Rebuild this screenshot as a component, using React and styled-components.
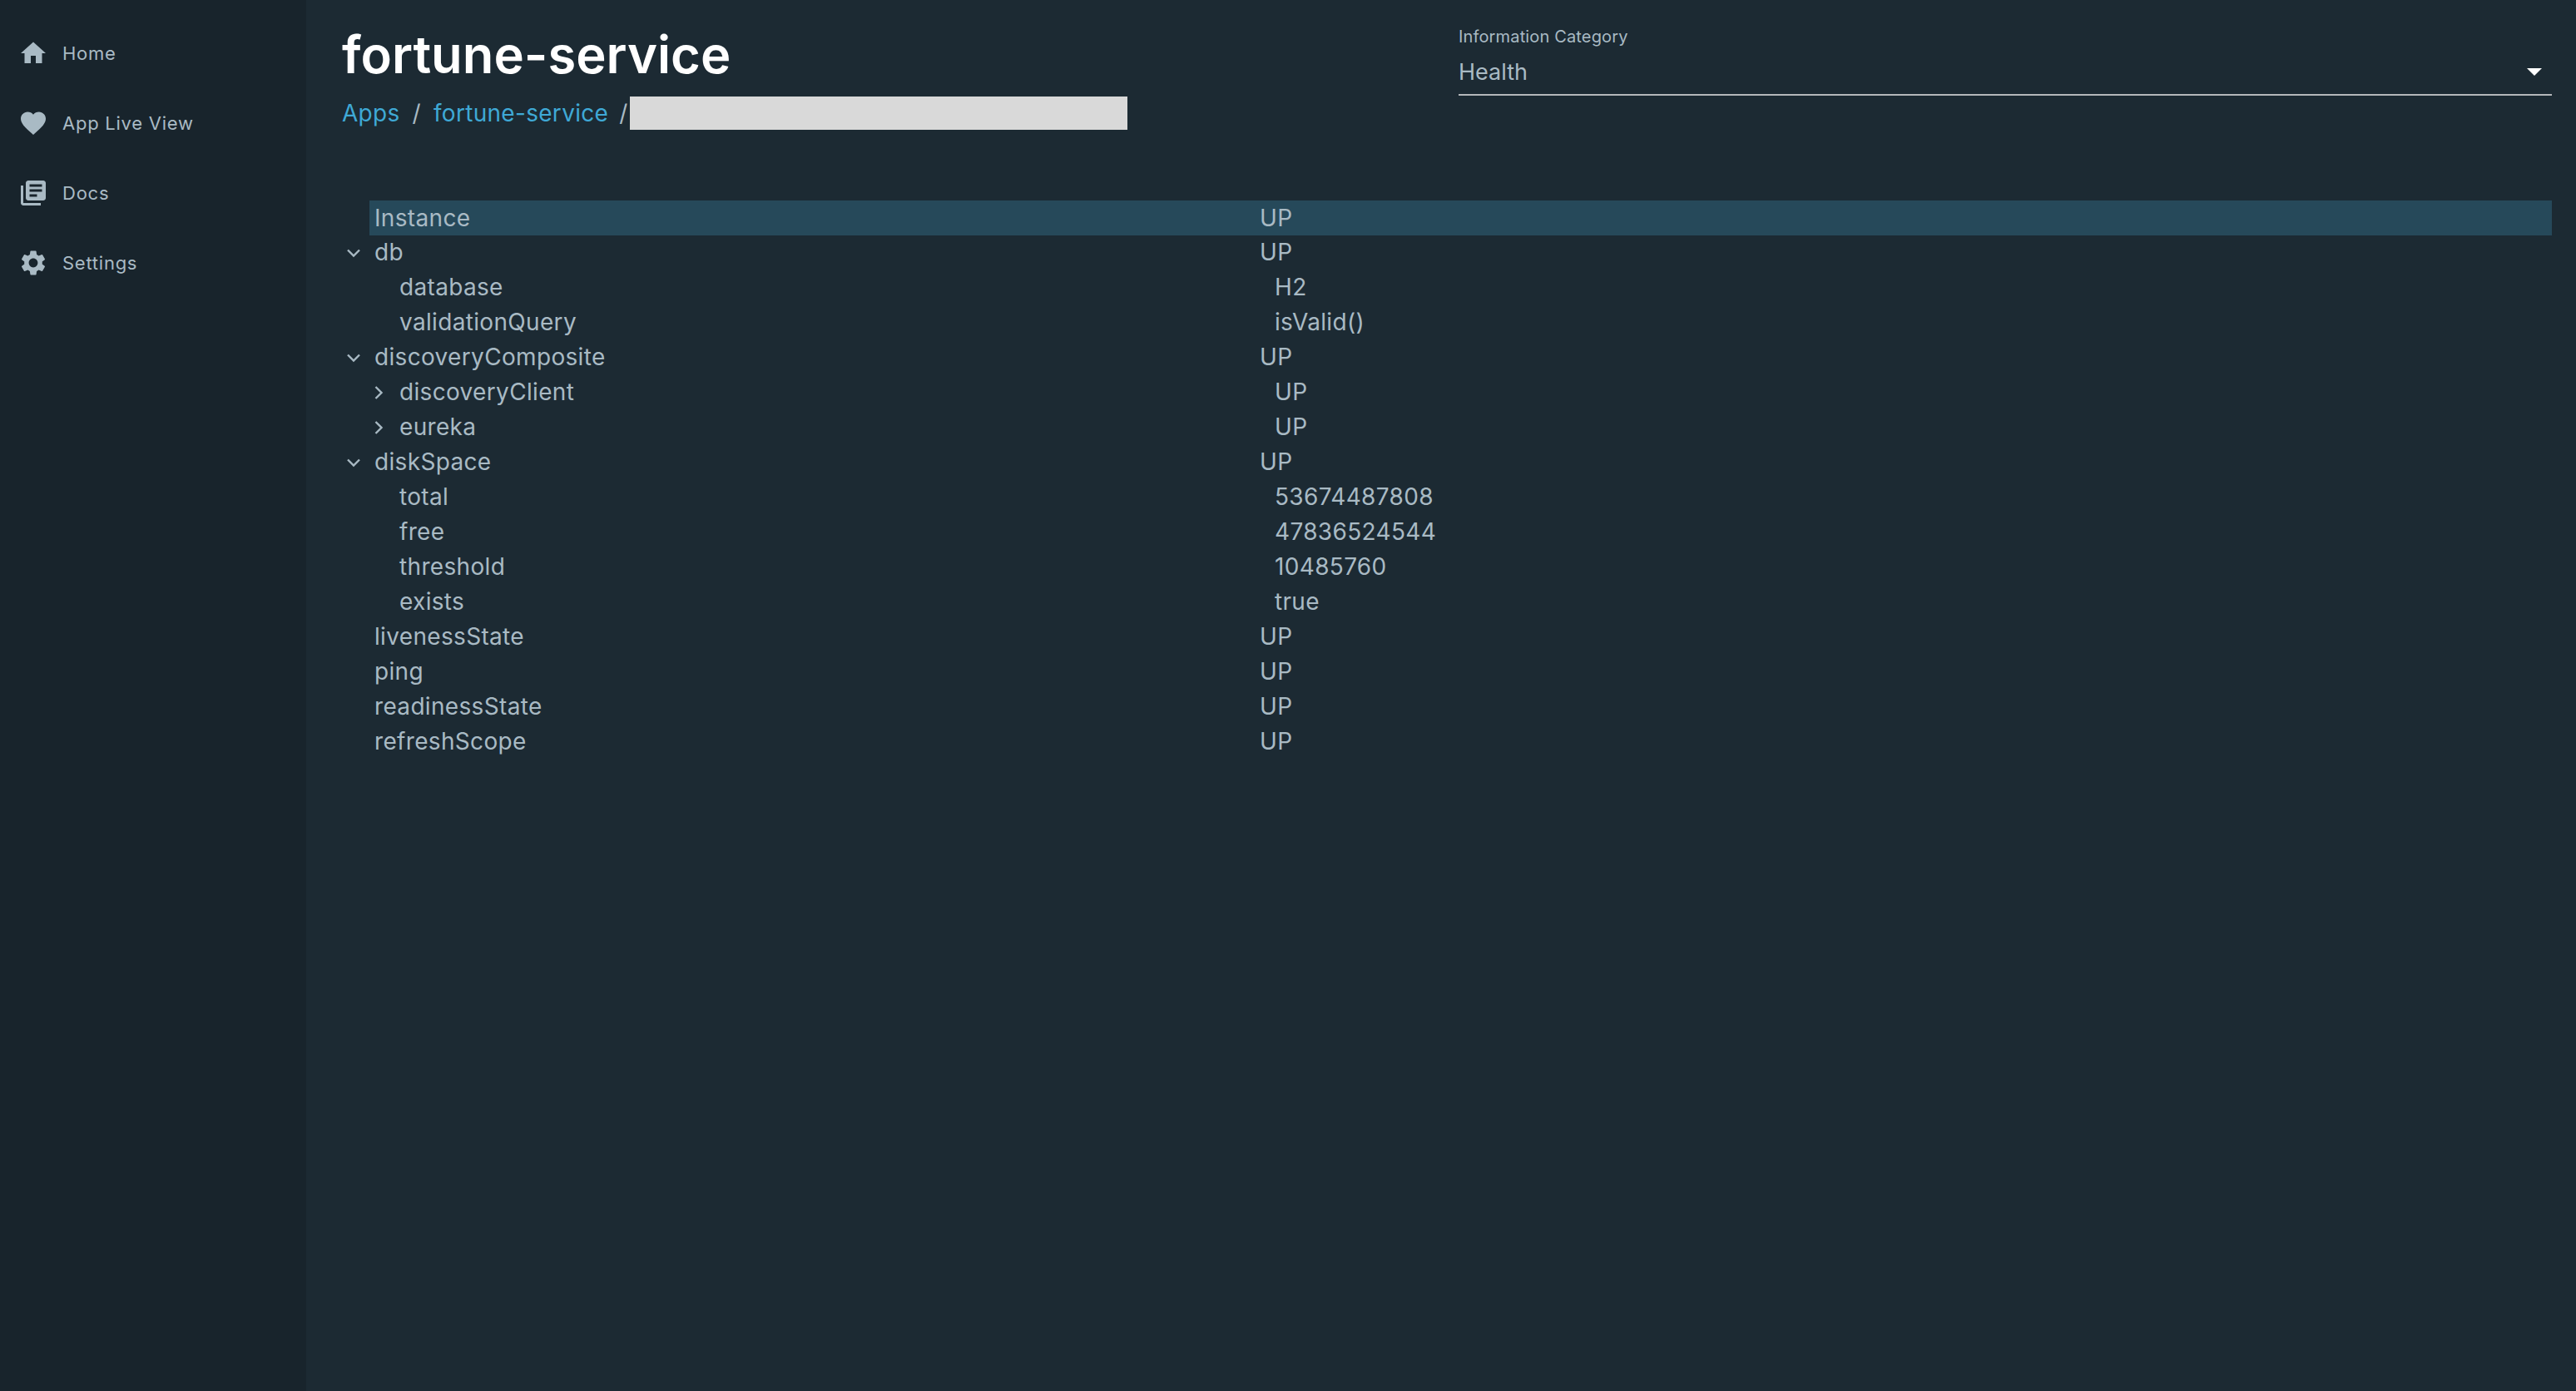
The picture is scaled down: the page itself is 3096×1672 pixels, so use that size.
import React from 'react';
import styled, { createGlobalStyle } from 'styled-components';
import { MdHome, MdFavorite, MdLibraryBooks, MdSettings } from 'react-icons/md';

const GlobalStyle = createGlobalStyle`
  html, body {
    margin: 0;
    padding: 0;
    height: 100%;
    background: #1c2a33;
  }
  body {
    font-family: Inter, "Open Sans", "Liberation Sans", sans-serif;
  }
`;

const navItems = [
  { label: 'Home', icon: MdHome },
  { label: 'App Live View', icon: MdFavorite },
  { label: 'Docs', icon: MdLibraryBooks },
  { label: 'Settings', icon: MdSettings },
];

const rows = [
  { label: 'db', value: 'UP', depth: 0, toggle: 'open' },
  { label: 'database', value: 'H2', depth: 1 },
  { label: 'validationQuery', value: 'isValid()', depth: 1 },
  { label: 'discoveryComposite', value: 'UP', depth: 0, toggle: 'open' },
  { label: 'discoveryClient', value: 'UP', depth: 1, toggle: 'closed' },
  { label: 'eureka', value: 'UP', depth: 1, toggle: 'closed' },
  { label: 'diskSpace', value: 'UP', depth: 0, toggle: 'open' },
  { label: 'total', value: '53674487808', depth: 1 },
  { label: 'free', value: '47836524544', depth: 1 },
  { label: 'threshold', value: '10485760', depth: 1 },
  { label: 'exists', value: 'true', depth: 1 },
  { label: 'livenessState', value: 'UP', depth: 0 },
  { label: 'ping', value: 'UP', depth: 0 },
  { label: 'readinessState', value: 'UP', depth: 0 },
  { label: 'refreshScope', value: 'UP', depth: 0 },
];

function Chevron({ open }) {
  return (
    <svg width="18" height="18" viewBox="0 0 18 18" fill="none">
      <path
        d={open ? 'M2 5.5 L9 12.5 L16 5.5' : 'M5.5 2 L12.5 9 L5.5 16'}
        stroke="#a9bac4"
        strokeWidth="2.4"
      />
    </svg>
  );
}

export default function App() {
  return (
    <Layout>
      <GlobalStyle />
      <Sidebar>
        {navItems.map(({ label, icon: Icon }) => (
          <NavItem key={label}>
            <Icon size={36} />
            <NavLabel>{label}</NavLabel>
          </NavItem>
        ))}
      </Sidebar>
      <Main>
        <Header>
          <TitleBlock>
            <Title>fortune-service</Title>
            <Breadcrumb>
              <Crumb>Apps</Crumb>
              <Slash>/</Slash>
              <Crumb>fortune-service</Crumb>
              <LastSlash>/</LastSlash>
              <Redacted />
            </Breadcrumb>
          </TitleBlock>
          <SelectBox>
            <SelectLabel>Information Category</SelectLabel>
            <SelectValue>
              Health
              <Caret />
            </SelectValue>
          </SelectBox>
        </Header>
        <Tree>
          <HeadRow>
            <HeadLabel>Instance</HeadLabel>
            <span>UP</span>
          </HeadRow>
          {rows.map((row) => (
            <Row key={row.label} $depth={row.depth}>
              <Toggle>{row.toggle && <Chevron open={row.toggle === 'open'} />}</Toggle>
              <RowLabel $depth={row.depth}>{row.label}</RowLabel>
              <span>{row.value}</span>
            </Row>
          ))}
        </Tree>
      </Main>
    </Layout>
  );
}

const Layout = styled.div`
  display: flex;
  width: 3096px;
  height: 1672px;
  overflow: hidden;
`;
const Sidebar = styled.nav`
  width: 368px;
  flex: none;
  box-sizing: border-box;
  padding-top: 22px;
  background: #18242c;
`;
const NavItem = styled.div`
  display: flex;
  align-items: center;
  gap: 17px;
  height: 84px;
  padding-left: 22px;
  color: #a9bac4;
`;
const NavLabel = styled.span`
  font-size: 22px;
  letter-spacing: 0.75px;
  line-height: 84px;
`;
const Main = styled.main`
  flex: 1;
  box-sizing: border-box;
  padding: 0 29px 0 43px;
  color: #a9bac4;
`;
const Header = styled.header`
  display: flex;
  justify-content: space-between;
  height: 241px;
`;
const TitleBlock = styled.div`
  padding-top: 28px;
`;
const Title = styled.h1`
  margin: 0;
  font-size: 61.5px;
  line-height: 76px;
  font-weight: 600;
  color: #fff;
`;
const Breadcrumb = styled.div`
  display: flex;
  align-items: center;
  height: 40px;
  margin-top: 12px;
  font-size: 28px;
  letter-spacing: 0.3px;
`;
const Crumb = styled.span`
  color: #3fa9d6;
`;
const Slash = styled.span`
  margin: 0 15px;
  color: #a9bac4;
`;
const LastSlash = styled(Slash)`
  margin: 0 2px 0 13px;
`;
const Redacted = styled.div`
  width: 598px;
  height: 40px;
  background: #d9d9d9;
`;
const SelectBox = styled.div`
  width: 1314px;
  padding-top: 32px;
`;
const SelectLabel = styled.div`
  font-size: 20px;
  letter-spacing: 0.15px;
  line-height: 24px;
`;
const SelectValue = styled.div`
  display: flex;
  align-items: center;
  justify-content: space-between;
  height: 59px;
  padding: 3px 12px 0 0;
  border-bottom: 2px solid #b4b8bb;
  box-sizing: border-box;
  font-size: 27px;
`;
const Caret = styled.span`
  width: 0;
  height: 0;
  border-left: 9px solid transparent;
  border-right: 9px solid transparent;
  border-top: 9px solid #fff;
`;
const Tree = styled.div`
  font-size: 28px;
  letter-spacing: 0.33px;
`;
const HeadRow = styled.div`
  display: flex;
  align-items: center;
  height: 42px;
  margin-left: 33px;
  padding-left: 6px;
  background: #26495a;
`;
const HeadLabel = styled.span`
  flex: 0 0 1064px;
`;
const Row = styled.div`
  display: flex;
  align-items: center;
  box-sizing: border-box;
  height: 42px;
  padding-left: ${(p) => p.$depth * 30}px;
  padding-bottom: 2px;
`;
const Toggle = styled.span`
  display: flex;
  justify-content: center;
  align-items: center;
  flex: 0 0 28px;
  margin: 2px 11px 0 0;
`;
const RowLabel = styled.span`
  flex: 0 0 ${(p) => (p.$depth ? 1052 : 1064)}px;
`;
